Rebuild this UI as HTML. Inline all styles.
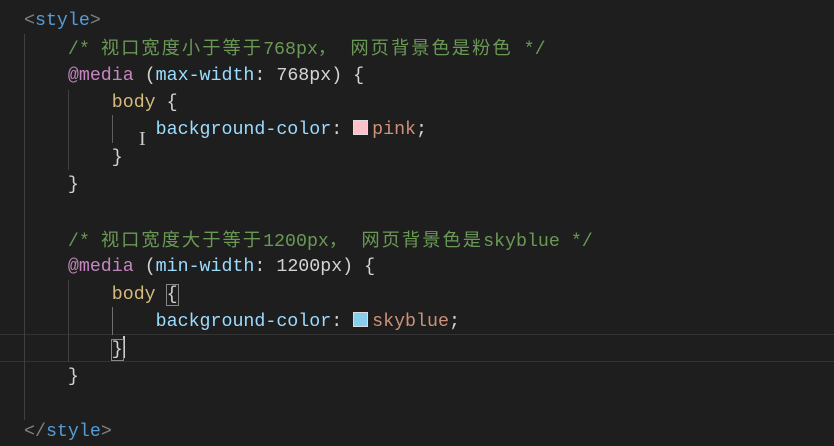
<!DOCTYPE html>
<html><head><meta charset="utf-8"><style>
body{margin:0;width:834px;height:444px;background:#1e1e1e;overflow:hidden;position:relative;font-family:"Liberation Mono","Noto Sans CJK SC",monospace;font-size:18.3px;}
.l{position:absolute;left:24px;white-space:pre;height:27px;line-height:27px;color:#d4d4d4}
.t{color:#569cd6}.g{color:#808080}.c{color:#6a9955}.k{color:#c586c0}.p{color:#9cdcfe}.s{color:#d7ba7d}.v{color:#ce9178}
.z{font-family:"Noto Sans CJK SC",sans-serif;letter-spacing:2px}
.gd{position:absolute;width:1px;background:#404040}
.sw{display:inline-block;width:13px;height:13px;border:1px solid #ddd;vertical-align:-1px;margin-right:4px}
</style></head><body>
<div style="position:absolute;left:0;top:334px;width:834px;height:26px;border-top:1px solid #333;border-bottom:1px solid #333"></div>
<div class="gd" style="left:24px;top:34px;height:386px"></div>
<div class="gd" style="left:68px;top:90px;height:80px"></div>
<div class="gd" style="left:68px;top:280px;height:82px"></div>
<div class="gd" style="left:112px;top:115px;height:28px;background:#606060"></div>
<div class="gd" style="left:112px;top:307px;height:28px;background:#707070"></div>
<div class="l" style="top:8px"><span class="g">&lt;</span><span class="t">style</span><span class="g">&gt;</span></div>
<div class="l" style="top:34px">    <span class="c">/* <span class="z">视口宽度小于等于</span>768px<span class="z">，  网页背景色是粉色</span> */</span></div>
<div class="l" style="top:63px">    <span class="k">@media</span> (<span class="p">max-width</span>: 768px) {</div>
<div class="l" style="top:90px">        <span class="s">body</span> {</div>
<div class="l" style="top:117px">            <span class="p">background-color</span>: <span class="sw" style="background:#ffc0cb"></span><span class="v">pink</span>;</div>
<div class="l" style="top:145px">        }</div>
<div class="l" style="top:172px">    }</div>
<div class="l" style="top:226px">    <span class="c">/* <span class="z">视口宽度大于等于</span>1200px<span class="z">，  网页背景色是</span>skyblue */</span></div>
<div class="l" style="top:254px">    <span class="k">@media</span> (<span class="p">min-width</span>: 1200px) {</div>
<div class="l" style="top:282px">        <span class="s">body</span> <span style="outline:1px solid #888">{</span></div>
<div class="l" style="top:309px">            <span class="p">background-color</span>: <span class="sw" style="background:#87ceeb"></span><span class="v">skyblue</span>;</div>
<div class="l" style="top:336px">        <span style="outline:1px solid #888">}</span><span style="display:inline-block;width:2px;height:22px;background:#ccc;vertical-align:-4px"></span></div>
<div class="l" style="top:364px">    }</div>
<div class="l" style="top:419px"><span class="g">&lt;/</span><span class="t">style</span><span class="g">&gt;</span></div>
<div style="position:absolute;left:139px;top:128px;color:#ccc;font-size:20px;font-family:'Liberation Serif',serif">I</div>
</body></html>
